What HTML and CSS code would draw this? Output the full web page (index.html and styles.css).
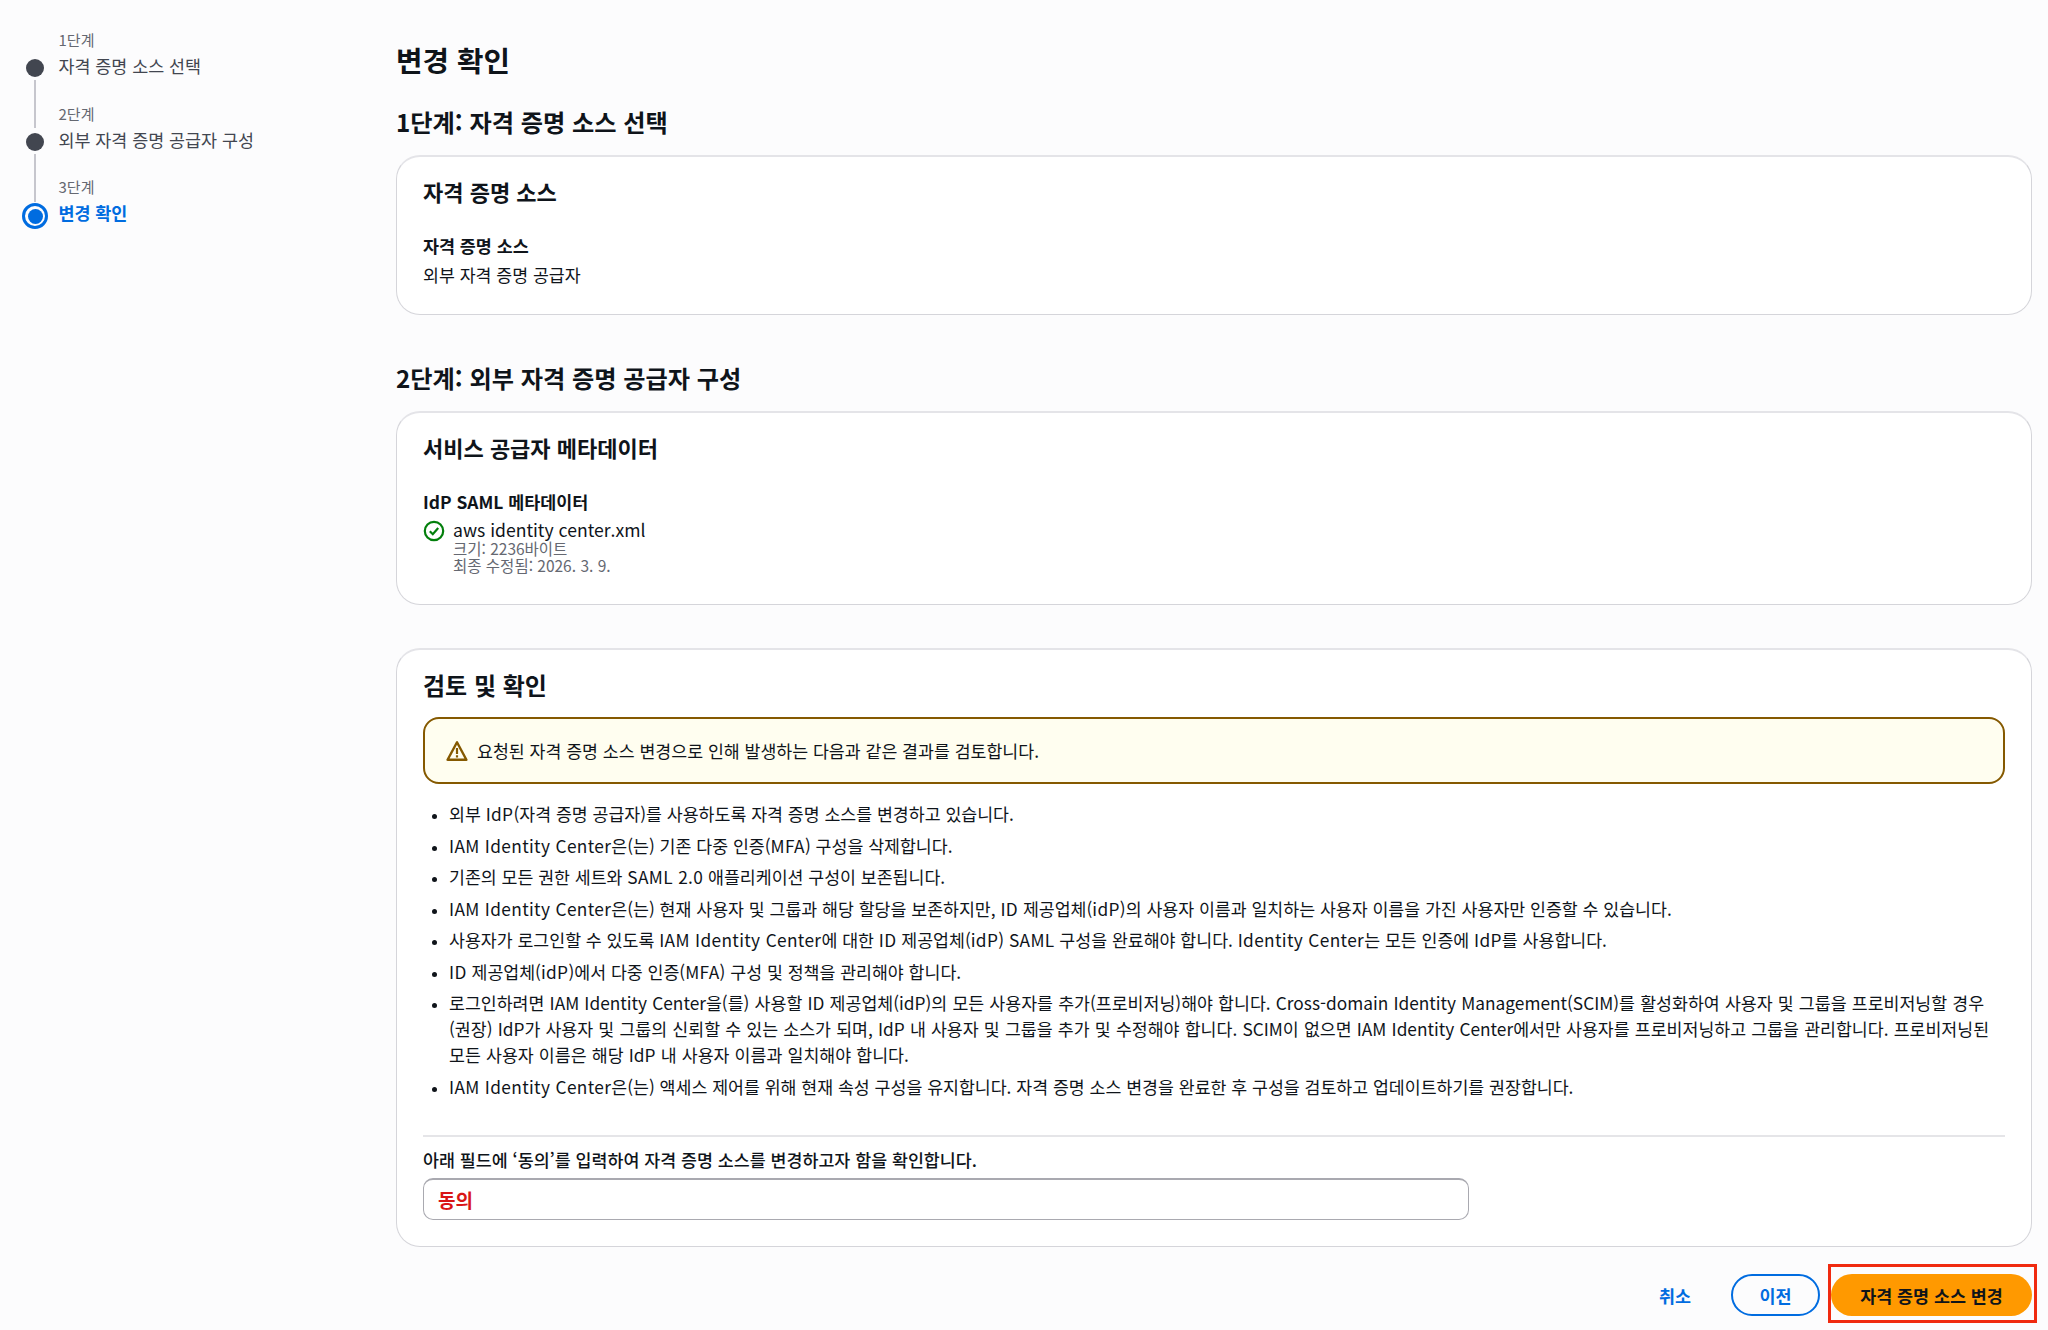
FILE: index.html

```html
<!DOCTYPE html>
<html lang="ko">
<head>
  <meta charset="UTF-8">
  <title>변경 확인</title>
  <link rel="stylesheet" href="styles.css">
</head>
<body>
  <div class="page">
    <nav class="steps">
      <div class="step done">
        <div class="step-label">1단계</div>
        <div class="step-name">자격 증명 소스 선택</div>
      </div>
      <div class="step done">
        <div class="step-label">2단계</div>
        <div class="step-name">외부 자격 증명 공급자 구성</div>
      </div>
      <div class="step current">
        <div class="step-label">3단계</div>
        <div class="step-name">변경 확인</div>
      </div>
    </nav>

    <main class="main">
      <h1>변경 확인</h1>

      <h2 class="section-title">1단계: 자격 증명 소스 선택</h2>
      <section class="card card-source">
        <h3>자격 증명 소스</h3>
        <div class="field-label">자격 증명 소스</div>
        <div class="field-value">외부 자격 증명 공급자</div>
      </section>

      <h2 class="section-title second">2단계: 외부 자격 증명 공급자 구성</h2>
      <section class="card card-meta">
        <h3>서비스 공급자 메타데이터</h3>
        <div class="field-label">IdP SAML 메타데이터</div>
        <div class="file">
          <svg class="file-icon" viewBox="0 0 22 22" width="22" height="22">
            <circle cx="11" cy="11" r="9.2" fill="none" stroke="#037f0c" stroke-width="2.2"/>
            <path d="M6.8 11.2l3 3 5.4-6.2" fill="none" stroke="#037f0c" stroke-width="2.2"/>
          </svg>
          <div>
            <div class="file-name">aws identity center.xml</div>
            <div class="file-info">크기: 2236바이트</div>
            <div class="file-info">최종 수정됨: 2026. 3. 9.</div>
          </div>
        </div>
      </section>

      <section class="card card-review">
        <h3>검토 및 확인</h3>
        <div class="alert">
          <svg class="alert-icon" viewBox="0 0 22 22" width="22" height="22">
            <path d="M11 2.2L1.6 19.8h18.8z" fill="none" stroke="#855900" stroke-width="2.4" stroke-linejoin="round"/>
            <path d="M11 8v6M11 15.2v2.2" fill="none" stroke="#855900" stroke-width="2.2"/>
          </svg>
          <span>요청된 자격 증명 소스 변경으로 인해 발생하는 다음과 같은 결과를 검토합니다.</span>
        </div>
        <ul class="notes">
          <li>외부 <span class="en">IdP</span>(자격 증명 공급자)를 사용하도록 자격 증명 소스를 변경하고 있습니다.</li>
          <li><span class="en">IAM Identity Center</span>은(는) 기존 다중 인증(<span class="en">MFA</span>) 구성을 삭제합니다.</li>
          <li>기존의 모든 권한 세트와 <span class="en">SAML 2.0</span> 애플리케이션 구성이 보존됩니다.</li>
          <li><span class="en">IAM Identity Center</span>은(는) 현재 사용자 및 그룹과 해당 할당을 보존하지만, <span class="en">ID</span> 제공업체(<span class="en">idP</span>)의 사용자 이름과 일치하는 사용자 이름을 가진 사용자만 인증할 수 있습니다.</li>
          <li>사용자가 로그인할 수 있도록 <span class="en">IAM Identity Center</span>에 대한 <span class="en">ID</span> 제공업체(<span class="en">idP</span>) <span class="en">SAML</span> 구성을 완료해야 합니다. <span class="en">Identity Center</span>는 모든 인증에 <span class="en">IdP</span>를 사용합니다.</li>
          <li><span class="en">ID</span> 제공업체(<span class="en">idP</span>)에서 다중 인증(<span class="en">MFA</span>) 구성 및 정책을 관리해야 합니다.</li>
          <li class="long">로그인하려면 IAM Identity Center을(를) 사용할 ID 제공업체(idP)의 모든 사용자를 추가(프로비저닝)해야 합니다. Cross-domain Identity Management(SCIM)를 활성화하여 사용자 및 그룹을 프로비저닝할 경우(권장) IdP가 사용자 및 그룹의 신뢰할 수 있는 소스가 되며, IdP 내 사용자 및 그룹을 추가 및 수정해야 합니다. SCIM이 없으면 IAM Identity Center에서만 사용자를 프로비저닝하고 그룹을 관리합니다. 프로비저닝된 모든 사용자 이름은 해당 IdP 내 사용자 이름과 일치해야 합니다.</li>
          <li><span class="en">IAM Identity Center</span>은(는) 액세스 제어를 위해 현재 속성 구성을 유지합니다. 자격 증명 소스 변경을 완료한 후 구성을 검토하고 업데이트하기를 권장합니다.</li>
        </ul>
        <div class="confirm">
          <label class="confirm-label" for="agree">아래 필드에 ‘동의’를 입력하여 자격 증명 소스를 변경하고자 함을 확인합니다.</label>
          <input class="confirm-input" id="agree" value="동의">
        </div>
      </section>

      <div class="actions">
        <button class="btn btn-link">취소</button>
        <button class="btn btn-normal">이전</button>
        <span class="highlight"><button class="btn btn-primary">자격 증명 소스 변경</button></span>
      </div>
    </main>
  </div>
</body>
</html>
```

FILE: styles.css

```css
*, *::before, *::after { box-sizing: border-box; }
html, body { margin: 0; height: 100%; }
body {
  background: #fcfcfd;
  color: #0f141a;
  font-family: "Noto Sans CJK KR", "Noto Sans", sans-serif;
  font-size: 17.3px;
  overflow: hidden;
}
.page { display: flex; padding-right: 16px; }

/* wizard steps */
.steps { width: 396px; flex: none; padding: 30px 0 0 58.5px; }
.step { position: relative; height: 73.5px; }
.step-label { font-size: 15px; line-height: 20px; color: #656871; }
.step-name { font-size: 17.4px; line-height: 26px; margin-top: 3px; color: #424650; }
.step::before {
  content: "";
  position: absolute;
  left: -33px;
  top: 29px;
  width: 18px;
  height: 18px;
  border-radius: 50%;
  background: #424650;
}
.step.done::after {
  content: "";
  position: absolute;
  left: -25px;
  top: 50px;
  width: 2px;
  height: 48px;
  background: #c6c6cd;
}
.step.current::before {
  left: -37px;
  top: 26px;
  width: 26px;
  height: 26px;
  padding: 2.5px;
  background: #006ce0;
  background-clip: content-box;
  border: 3px solid #006ce0;
}
.step.current .step-name { color: #006ce0; font-weight: 700; }

/* main column */
.main { flex: 1; min-width: 0; }
h1 { margin: 40px 0 0; font-size: 28.8px; line-height: 40px; font-weight: 700; }
.section-title { margin: 25px 0 0; font-size: 24.2px; line-height: 34px; font-weight: 700; }
.section-title.second { margin-top: 46px; }

.card {
  background: #fff;
  border: 1px solid #d5d5da;
  border-top: 2px solid #e4e4e8;
  border-radius: 24px;
  padding: 18px 26px 20px;
  margin-top: 16px;
}
.card h3 { margin: 0; font-size: 22px; line-height: 32px; font-weight: 700; }
.card-source { height: 160px; }
.card-meta { height: 194px; }
.card-review { height: 599px; margin-top: 43px; }
.card-review h3 { font-size: 24px; padding-top: 1px; line-height: 31px; }

.field-label { margin-top: 26px; font-weight: 700; line-height: 26px; font-size: 17.4px; }
.field-value { margin-top: 3px; line-height: 26px; }

.file { display: flex; gap: 8px; margin-top: 2px; }
.file-icon { margin-top: 3px; flex: none; }
.file-name { line-height: 26px; font-size: 17.6px; }
.file-info { font-size: 15.5px; line-height: 17.5px; color: #656871; }
.file-name + .file-info { margin-top: -3.5px; }

.alert {
  display: flex;
  align-items: center;
  gap: 9px;
  height: 67px;
  margin-top: 17px;
  padding-left: 21px;
  background: #fffef0;
  border: 2.5px solid #855900;
  border-radius: 16px;
}
.alert-icon { flex: none; }

.notes { margin: 17px 0 0; padding: 0 0 0 26px; line-height: 26px; }
.notes li { margin-bottom: 5.5px; }
.notes li::marker { font-size: 14px; }
.notes .long { word-spacing: .35px; }
.en { letter-spacing: .35px; }

.confirm { margin-top: 35px; border-top: 2px solid #e5e5e8; padding-top: 10px; }
.confirm-label { display: block; font-size: 17.35px; font-weight: 500; line-height: 26px; }
.confirm-input {
  display: block;
  width: 1046px;
  height: 42px;
  margin-top: 5px;
  padding: 0 14px;
  background: #fff;
  border: 1px solid #a9a9b0;
  border-top-width: 2px;
  border-radius: 10px;
  color: #d91515;
  font: 700 19px "Noto Sans CJK KR", sans-serif;
}

/* footer buttons */
.actions { display: flex; justify-content: flex-end; align-items: center; margin-top: 27px; }
.btn {
  height: 42px;
  padding: 0;
  border-radius: 21px;
  background: none;
  border: 0;
  font: 700 17.4px "Noto Sans CJK KR", sans-serif;
  color: #006ce0;
}
.btn-link { margin-right: 40px; }
.btn-normal { width: 89px; margin-right: 11px; border: 2.5px solid #006ce0; }
.btn-primary { display: block; width: 201px; background: #ff9900; color: #0f141a; }
.highlight { display: block; position: relative; }
.highlight::after {
  content: "";
  position: absolute;
  top: -10px;
  bottom: -7px;
  left: -3px;
  right: -5px;
  border: 3.5px solid #f02a10;
}
```
